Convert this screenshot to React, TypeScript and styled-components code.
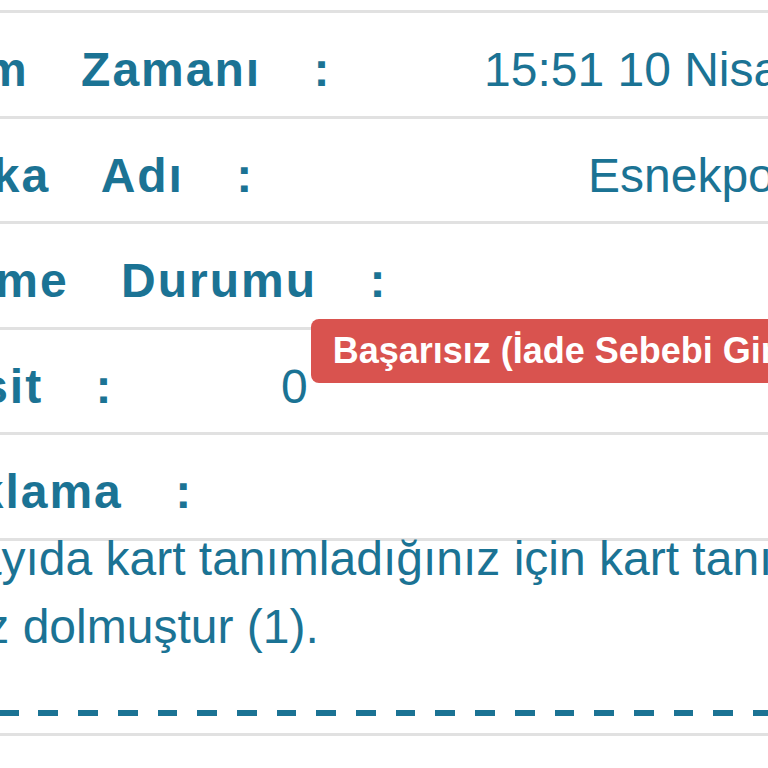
import React from "react";
import styled, { createGlobalStyle } from "styled-components";

const teal = "#1b7394";
const line = "#e1e1e1";

const GlobalStyle = createGlobalStyle`
  body {
    margin: 0;
    background: #ffffff;
    font-family: "Liberation Sans", Arial, sans-serif;
  }
`;

const Page = styled.div`
  width: 768px;
  height: 768px;
  overflow: hidden;
  background: #ffffff;
`;

const Sheet = styled.div`
  width: 1400px;
  margin-left: -160px;
  padding-top: 10px;
`;

const Row = styled.div<{ $valueAt?: number }>`
  display: grid;
  grid-template-columns: ${(p) => p.$valueAt ?? 600}px auto;
  align-items: start;
  height: 105.5px;
  box-sizing: border-box;
  border-top: 3px solid ${line};
  padding: 29px 0 0 56px;
`;

const Label = styled.div`
  font-size: 48px;
  font-weight: 700;
  letter-spacing: 2px;
  word-spacing: 37px;
  color: ${teal};
  white-space: nowrap;
`;

const Value = styled.div`
  display: flex;
  align-items: flex-start;
  font-size: 48px;
  color: ${teal};
  white-space: nowrap;
`;

const Badge = styled.span`
  margin: -40px 0 0 3px;
  height: 64px;
  line-height: 64px;
  padding: 0 22px;
  border-radius: 8px;
  background: #d9534f;
  color: #ffffff;
  font-size: 36px;
  font-weight: 700;
  white-space: nowrap;
`;

const Note = styled.div`
  border-top: 3px solid ${line};
  padding-left: 12px;
`;

const NoteText = styled.p`
  margin: -15.5px 0 0;
  width: 1140px;
  font-size: 48px;
  line-height: 68px;
  color: ${teal};
`;

const Dashes = styled.div`
  height: 6px;
  margin-top: 48.8px;
  background: repeating-linear-gradient(
    to right,
    ${teal} 0 19.7px,
    transparent 19.7px 39.7px
  );
`;

const Rule = styled.div`
  margin-top: 17px;
  border-top: 3px solid ${line};
`;

export default function App() {
  return (
    <Page>
      <GlobalStyle />
      <Sheet>
        <Row $valueAt={588}>
          <Label>İşlem Zamanı :</Label>
          <Value>15:51 10 Nisan 2019</Value>
        </Row>
        <Row $valueAt={692}>
          <Label>Banka Adı :</Label>
          <Value>Esnekpos</Value>
        </Row>
        <Row>
          <Label>Ödeme Durumu :</Label>
        </Row>
        <Row $valueAt={385}>
          <Label>Taksit :</Label>
          <Value>
            0<Badge>Başarısız (İade Sebebi Girilmemiş)</Badge>
          </Value>
        </Row>
        <Row>
          <Label>Açıklama :</Label>
        </Row>
        <Note>
          <NoteText>
            Çok sayıda kart tanımladığınız için kart tanımlama limitiniz
            dolmuştur (1).
          </NoteText>
        </Note>
        <Dashes />
        <Rule />
      </Sheet>
    </Page>
  );
}
